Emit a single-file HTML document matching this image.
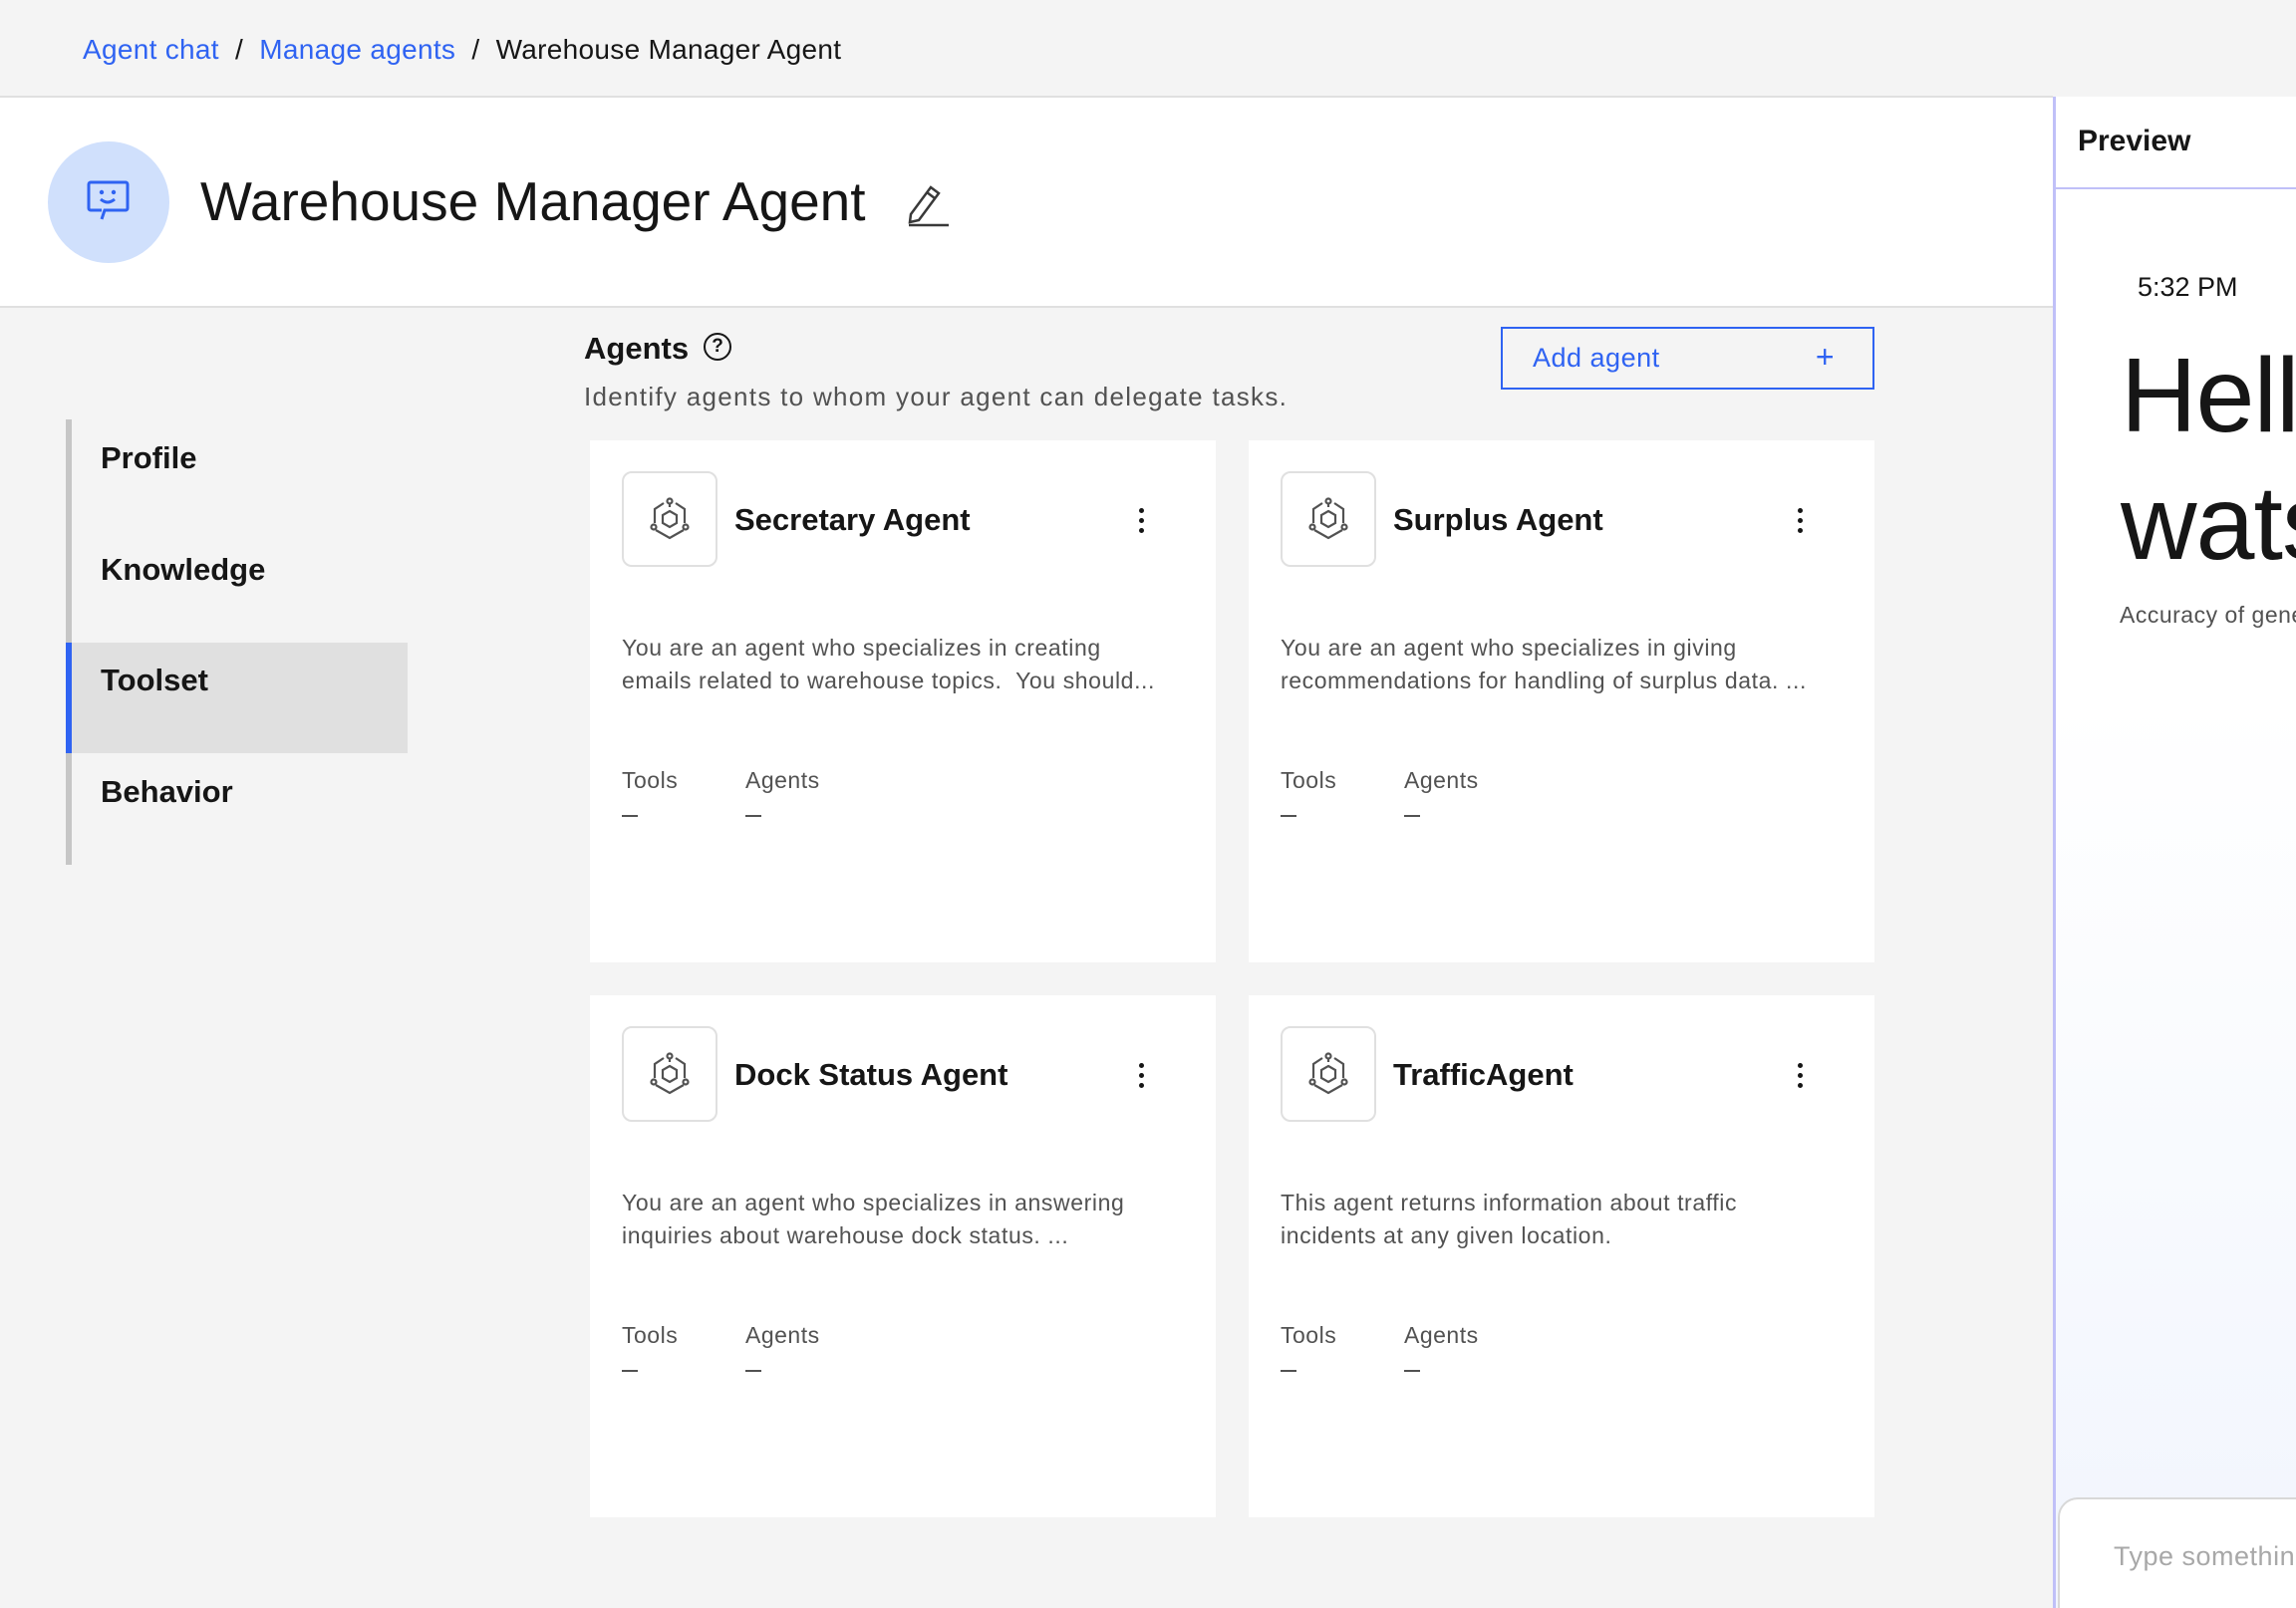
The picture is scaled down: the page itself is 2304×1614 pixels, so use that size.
<!DOCTYPE html>
<html><head><meta charset="utf-8"><style>
*{margin:0;padding:0;box-sizing:border-box}
body{width:2304px;height:1614px;overflow:hidden;background:#f4f4f4;font-family:"Liberation Sans",sans-serif;color:#161616;position:relative}
.a{position:absolute;white-space:nowrap}
.blue{color:#2f63f2}
.card{position:absolute;width:628px;height:524px;background:#fff}
.ib{position:absolute;left:32px;top:31px;width:96px;height:96px;border:2px solid #e0e0e0;border-radius:10px;display:flex;align-items:center;justify-content:center}
.ct{position:absolute;left:145px;top:62px;font-size:31px;font-weight:bold}
.kb{position:absolute;left:551px;top:68px;width:6px}
.kb i{display:block;width:5px;height:5px;background:#161616;border-radius:50%;margin-bottom:5px}
.d{position:absolute;left:32px;top:192px;font-size:23px;line-height:33px;color:#525252;letter-spacing:0.6px}
.l{position:absolute;top:328px;font-size:23px;color:#525252;letter-spacing:0.5px}
.ds{position:absolute;top:376px;width:16px;height:2px;background:#525252}
.nav{position:absolute;left:101px;font-size:31px;font-weight:bold}
</style></head><body>
<div class="a" style="left:83px;top:34px;font-size:28px;letter-spacing:0.3px"><span class="blue">Agent chat</span>&nbsp;&nbsp;/&nbsp;&nbsp;<span class="blue">Manage agents</span>&nbsp;&nbsp;/&nbsp;&nbsp;Warehouse Manager Agent</div>
<div class="a" style="left:0;top:96px;width:2060px;height:213px;background:#fff;border-top:2px solid #e0e0e0;border-bottom:2px solid #e0e0e0"></div>
<div class="a" style="left:48px;top:142px;width:122px;height:122px;border-radius:50%;background:#d0e0fc"></div>
<svg class="a" style="left:86px;top:180px" width="46" height="46" viewBox="0 0 46 46" fill="none" stroke="#2f63f2" stroke-width="3"><path d="M5 3h35a2 2 0 0 1 2 2v24a2 2 0 0 1-2 2H19l-3 9M16 31H5a2 2 0 0 1-2-2V5a2 2 0 0 1 2-2"/><circle cx="16" cy="13" r="2.2" fill="#2f63f2" stroke="none"/><circle cx="28" cy="13" r="2.2" fill="#2f63f2" stroke="none"/><path d="M15 20q7 6 14 0"/></svg>
<div class="a" style="left:201px;top:170px;font-size:55px">Warehouse Manager Agent</div>
<svg class="a" style="left:908px;top:182px" width="48" height="46" viewBox="0 0 48 46" fill="none" stroke="#393939" stroke-width="2.5"><path d="M6 33L26 6l8 6-20 27-9 2z"/><path d="M22 11l8 6"/><path d="M4 44h40"/></svg>

<div class="a" style="left:66px;top:421px;width:6px;height:447px;background:#c6c6c6"></div>
<div class="a" style="left:66px;top:645px;width:343px;height:111px;background:#e0e0e0;border-left:6px solid #2f63f2"></div>
<div class="nav a" style="top:442px">Profile</div>
<div class="nav a" style="top:554px">Knowledge</div>
<div class="nav a" style="top:665px">Toolset</div>
<div class="nav a" style="top:777px">Behavior</div>

<div class="a" style="left:586px;top:332px;font-size:31px;font-weight:bold">Agents</div>
<div class="a" style="left:706px;top:334px;width:28px;height:28px;border:2.5px solid #161616;border-radius:50%;font-size:19px;font-weight:bold;text-align:center;line-height:23px">?</div>
<div class="a" style="left:586px;top:383px;font-size:26px;color:#525252;letter-spacing:1.3px">Identify agents to whom your agent can delegate tasks.</div>
<div class="a" style="left:1506px;top:328px;width:375px;height:63px;border:2px solid #2f63f2;color:#2f63f2;font-size:27px;padding:14px 0 0 30px;letter-spacing:0.5px">Add agent<span style="position:absolute;right:38px;top:10px;font-size:32px">+</span></div>

<svg width="0" height="0" style="position:absolute"><defs><g id="ic" fill="none" stroke="#525252" stroke-width="2.2"><path d="M18 8L9 14v14M10 35l14 8 14-8M39 28V14l-9-6"/><path d="M24 16l7 4v8l-7 4-7-4v-8z"/><circle cx="24" cy="6" r="2.5"/><circle cx="8" cy="32" r="2.5"/><circle cx="40" cy="32" r="2.5"/><path d="M24 8.5V12"/></g></defs></svg>

<div class="card" style="left:592px;top:442px"><div class="ib"><svg width="48" height="48"><use href="#ic"/></svg></div><div class="ct">Secretary Agent</div><div class="kb"><i></i><i></i><i></i></div><div class="d">You are an agent who specializes in creating<br>emails related to warehouse topics.&nbsp; You should...</div><div class="l" style="left:32px">Tools</div><div class="l" style="left:156px">Agents</div><div class="ds" style="left:32px"></div><div class="ds" style="left:156px"></div></div>
<div class="card" style="left:1253px;top:442px"><div class="ib"><svg width="48" height="48"><use href="#ic"/></svg></div><div class="ct">Surplus Agent</div><div class="kb"><i></i><i></i><i></i></div><div class="d">You are an agent who specializes in giving<br>recommendations for handling of surplus data. ...</div><div class="l" style="left:32px">Tools</div><div class="l" style="left:156px">Agents</div><div class="ds" style="left:32px"></div><div class="ds" style="left:156px"></div></div>
<div class="card" style="left:592px;top:999px"><div class="ib"><svg width="48" height="48"><use href="#ic"/></svg></div><div class="ct">Dock Status Agent</div><div class="kb"><i></i><i></i><i></i></div><div class="d">You are an agent who specializes in answering<br>inquiries about warehouse dock status. ...</div><div class="l" style="left:32px">Tools</div><div class="l" style="left:156px">Agents</div><div class="ds" style="left:32px"></div><div class="ds" style="left:156px"></div></div>
<div class="card" style="left:1253px;top:999px"><div class="ib"><svg width="48" height="48"><use href="#ic"/></svg></div><div class="ct">TrafficAgent</div><div class="kb"><i></i><i></i><i></i></div><div class="d">This agent returns information about traffic<br>incidents at any given location.</div><div class="l" style="left:32px">Tools</div><div class="l" style="left:156px">Agents</div><div class="ds" style="left:32px"></div><div class="ds" style="left:156px"></div></div>

<div class="a" style="left:2060px;top:97px;width:244px;height:1517px;background:linear-gradient(#fff 40%,#f1f5fd);border-left:3px solid #c0c0f8;overflow:hidden">
<div style="position:absolute;left:0;top:0;width:244px;height:93px;background:#fff;border-bottom:2px solid #c0c0f8"></div>
<div class="a" style="left:22px;top:28px;font-size:30px;font-weight:bold">Preview</div>
<div class="a" style="left:82px;top:176px;font-size:27px">5:32 PM</div>
<div class="a" style="left:65px;top:236px;font-size:106px;line-height:128px;letter-spacing:-1px">Hello<br>watsonx</div>
<div class="a" style="left:64px;top:507px;font-size:23px;color:#525252;letter-spacing:0.5px">Accuracy of generated</div>
<div class="a" style="left:2px;top:1406px;width:260px;height:130px;background:#fff;border:2px solid #d8d8d8;border-radius:20px"></div>
<div class="a" style="left:58px;top:1450px;font-size:27px;color:#a8a8a8;letter-spacing:0.5px">Type something</div>
</div>
</body></html>
